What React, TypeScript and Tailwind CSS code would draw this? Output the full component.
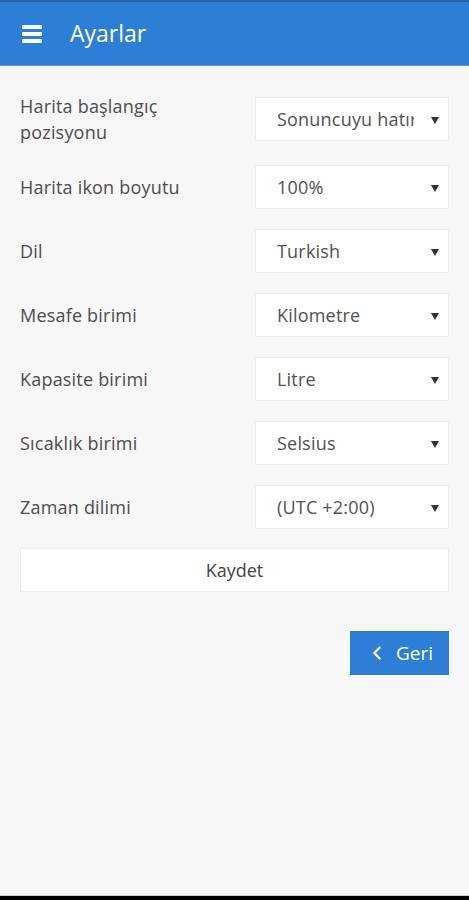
import { ChevronLeft } from "lucide-react";

const rows = [
  { label: "Harita başlangıç pozisyonu", value: "Sonuncuyu hatırla" },
  { label: "Harita ikon boyutu", value: "100%" },
  { label: "Dil", value: "Turkish" },
  { label: "Mesafe birimi", value: "Kilometre" },
  { label: "Kapasite birimi", value: "Litre" },
  { label: "Sıcaklık birimi", value: "Selsius" },
  { label: "Zaman dilimi", value: "(UTC +2:00)" },
];

function Select({ value }: { value: string }) {
  return (
    <div className="relative flex h-[44px] w-[194px] shrink-0 items-center border border-[#ededed] bg-white pl-[21px] pr-[34px]">
      <span className="overflow-hidden whitespace-nowrap text-[18px] tracking-[0.2px] text-[#525252]">{value}</span>
      <span className="absolute right-[9px] top-[19px] h-0 w-0 border-x-[4px] border-t-[7px] border-x-transparent border-t-[#333]" />
    </div>
  );
}

export default function App() {
  return (
    <div
      className="flex h-[900px] flex-col bg-[#f7f7f7]"
      style={{ fontFamily: '"Open Sans", "Noto Sans", sans-serif' }}
    >
      {/* Header */}
      <div className="flex h-[66px] shrink-0 items-center border-t-2 border-b border-t-[#2166b3] border-b-[#5a9be0] bg-[#2c7fd5]">
        <div className="ml-[22px] flex w-[20px] flex-col gap-[3px]">
          <div className="h-[4px] rounded-[1px] bg-white" />
          <div className="h-[4px] rounded-[1px] bg-white" />
          <div className="h-[4px] rounded-[1px] bg-white" />
        </div>
        <h1 className="ml-[28px] text-[23px] text-white">Ayarlar</h1>
      </div>

      {/* Form */}
      <div className="flex flex-1 flex-col px-5 pt-[27px]">
        <div className="flex flex-col gap-5">
          {rows.map((r) => (
            <div key={r.label} className="flex items-center">
              <div className="w-[236px] pr-[60px] text-[18px] leading-[26px] tracking-[0.2px] text-[#4d4d4d]">{r.label}</div>
              <Select value={r.value} />
            </div>
          ))}
        </div>

        <button className="mt-[19px] h-[44px] w-full border border-[#ededed] bg-white text-[18px] text-[#444]">
          Kaydet
        </button>

        <div className="mt-[39px] flex justify-end">
          <button className="flex h-[44px] w-[99px] items-center justify-center gap-[8px] bg-[#2c7fd5] text-[19px] text-white">
            <ChevronLeft size={22} strokeWidth={2.5} />
            <span>Geri</span>
          </button>
        </div>
      </div>

      <div className="h-[1px] bg-[#cfcfcf]" />
      <div className="h-[4px] bg-black" />
    </div>
  );
}
